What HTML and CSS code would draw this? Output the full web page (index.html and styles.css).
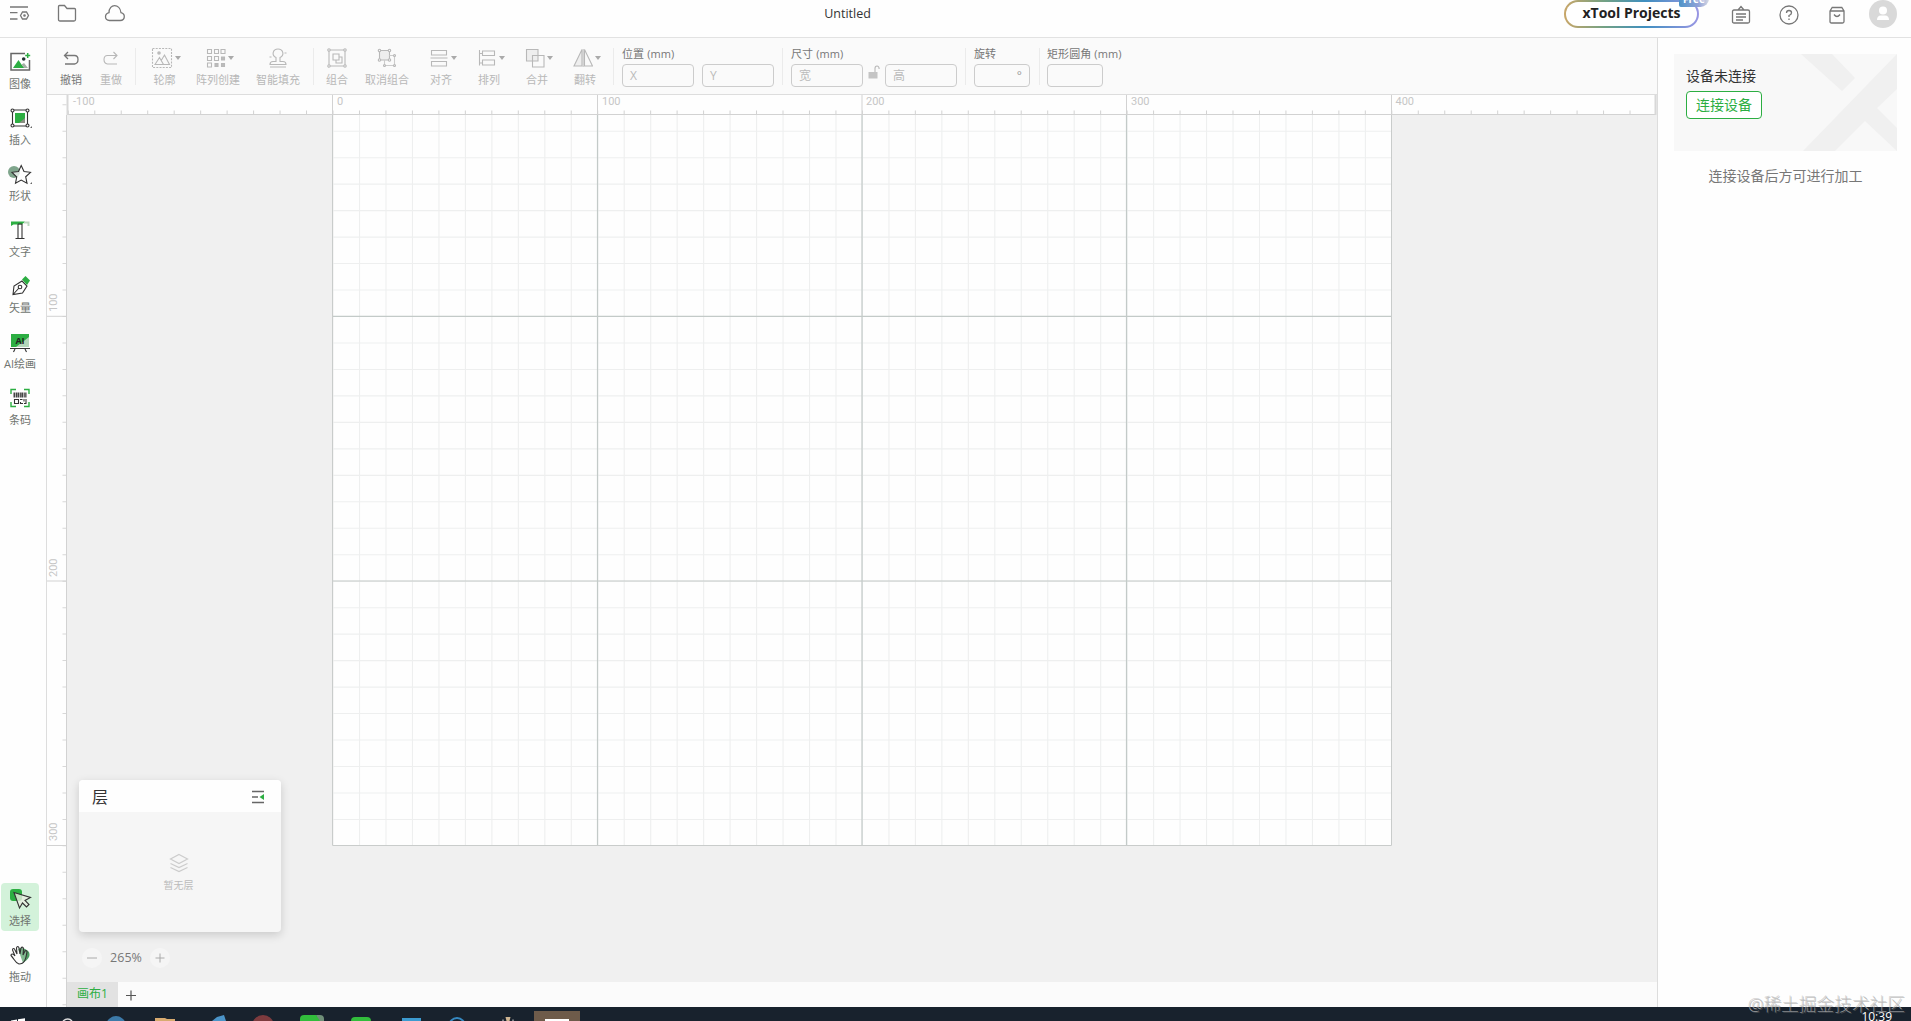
FILE: index.html
```html
<!DOCTYPE html>
<html lang="zh-CN">
<head>
<meta charset="utf-8">
<title>Untitled</title>
<link rel="stylesheet" href="styles.css">
</head>
<body>
<div class="app">
  <header class="header">
    <div class="header-left">
      <svg class="ic" width="24" height="24" viewBox="0 0 24 24"><path d="M3 6h18M3 11.700h7.500M3 18h7.500"/><path d="M13.500 14.500l2-3.500h4l2 3.500-2 3.500h-4z"/><circle cx="17.500" cy="14.500" r=".7"/></svg>
      <svg class="ic" width="24" height="24" viewBox="0 0 24 24"><path d="M4.500 4.500h5l2.500 3h7.500q1 0 1 1v10q0 1.500-1.500 1.500H5q-1.500 0-1.500-1.500v-13q0-1 1-1z"/></svg>
      <svg class="ic" width="24" height="24" viewBox="0 0 24 24"><path d="M6.500 19.500c-5.500-.3-5-6.800-.5-7.800 0-9.500 11-9.500 12 0 4.500 1 4.500 7.500-.8 7.800z"/></svg>
    </div>
    <div class="title">Untitled</div>
    <div class="header-right">
      <div class="projects">xTool Projects<span class="free">Free</span></div>
      <svg class="ic" width="24" height="24" viewBox="0 0 24 24"><path d="M5 7h14q1.500 0 1.500 1.500v10q0 1.500-1.500 1.500H5q-1.500 0-1.500-1.500v-10Q3.500 7 5 7zM9 7l3-3.500L15 7M7 11h10M7 14h10M7 17h7"/></svg>
      <svg class="ic" width="24" height="24" viewBox="0 0 24 24"><circle cx="12" cy="12" r="9"/><path d="M9.500 10q0-2.500 2.500-2.500t2.500 2.200Q14.500 11.500 12 12.500v1.500M12 15.500v1.500"/></svg>
      <svg class="ic" width="24" height="24" viewBox="0 0 24 24"><path d="M5 8l2.200-3.500h9.600L19 8v10.500q0 1.500-1.500 1.500h-11Q5 20 5 18.500zM5 8h14M9 11.500q3 4 6 0"/></svg>
      <svg class="avatar" width="28" height="28" viewBox="0 0 28 28"><circle cx="14" cy="14" r="14" fill="#d9d9d9"/><circle cx="14" cy="10.500" r="4" fill="#fff"/><path d="M8 20q0-4.500 4-4.500h4q4 0 4 4.500z" fill="#fff"/></svg>
    </div>
  </header>

  <div class="main">
    <nav class="sidebar">
      <div class="side-group">
        <div class="side"><svg width="24" height="24" viewBox="0 0 24 24"><path d="M17 3.500H3v16.500h18.500V10" class="d g"/><path d="M5 18l5.500-8 3 4.500 3 3.500z" fill="#2cae42"/><path d="M13.500 14.500l2.500-1.500 4 5h-4z" fill="#a5b0a6"/><circle cx="15.700" cy="9" r="1.800" fill="#233"/><path d="M19.700 3v5M17.200 5.500h5" stroke="#2cae42" stroke-width="1.500"/></svg><span>图像</span></div>
        <div class="side more"><svg width="24" height="24" viewBox="0 0 24 24"><path d="M7 7h10v7l-4 3H7z" fill="#2cae42"/><path d="M17 12v5h-6z" fill="#8a8f82"/><path d="M6 4h12M4.500 5.500v13M6 20h12M19.500 5.500v13" class="d"/><g class="d" fill="#fff"><circle cx="4.500" cy="4.500" r="1.500"/><circle cx="19.500" cy="4.500" r="1.500"/><circle cx="4.500" cy="19.500" r="1.500"/><circle cx="19.500" cy="19.500" r="1.500"/></g></svg><span>插入</span></div>
        <div class="side more"><svg width="24" height="24" viewBox="0 0 24 24"><circle cx="6" cy="10" r="6" fill="#7fa58c"/><path d="M13.200 3.500l2.800 6 6.500.8-4.800 4.500 1.300 6.500-5.800-3.200-5.700 3.200L8.700 15 4 10.300l6.500-.8z" class="d" fill="#fff" fill-opacity=".7"/></svg><span>形状</span></div>
        <div class="side"><svg width="24" height="24" viewBox="0 0 24 24"><path d="M3 8V3.500h14l-3 3H5.500z" fill="#2cae42"/><path d="M16 4.500h4.500V8" stroke="#bcd5bf" stroke-width="2"/><path d="M10 6v14.500M14 6v14.500M7.500 20.500h9M10 6h4" class="d"/></svg><span>文字</span></div>
        <div class="side"><svg width="24" height="24" viewBox="0 0 24 24"><path d="M5 20.500L6 12l8-5 5 5-4.500 7zM5 20.500l6-6.500" class="d"/><circle cx="12" cy="13" r="1.800" class="d"/><path d="M14 5.500L17.500 2 22 6.500 19 11z" fill="#2cae42"/></svg><span>矢量</span></div>
        <div class="side"><svg width="24" height="24" viewBox="0 0 24 24"><path d="M3 4h18v13H3z" fill="#2cae42"/><path d="M21 7v10H8z" fill="#b3d6b9"/><text x="12" y="14" text-anchor="middle" class="ai">AI</text><path d="M2 18.500h20M7 19l-1.500 3M17 19l1.500 3" class="d"/></svg><span>AI绘画</span></div>
        <div class="side"><svg width="24" height="24" viewBox="0 0 24 24"><path d="M3 8V3.500h5M16 3.500h5V8M3 16v4.500h5M16 20.500h5V16" stroke="#2cae42" stroke-width="1.400"/><path d="M5.500 9h13" stroke="#444" stroke-width="5" stroke-dasharray="1.700 .6 1.200 .4"/><path d="M6.500 13.500h4v4h-4zM12 13.500h2.500M16 13v2.500M18 13v5M12.500 16v2M12 17.500h3M16 17.500h2" class="d" stroke-width="1.400"/></svg><span>条码</span></div>
      </div>
      <div class="side-group">
        <div class="side active"><svg width="24" height="24" viewBox="0 0 24 24"><path d="M5 2h6q3 0 3 3v6q0 3-3 3H5q-3 0-3-3V5q0-3 3-3z" fill="#2cae42"/><path d="M6 5.500l16.500 5-5.500 3 4 4-2.500 2.500-4-4-3 5z" class="d" fill="#e8eee0" fill-opacity=".8"/></svg><span>选择</span></div>
        <div class="side"><svg width="24" height="24" viewBox="0 0 24 24"><path d="M10 6q5-3 11 3c2 5-2 8-6 11z" fill="#4d9b61"/><path d="M11 21c-4-1-4.500-5-8-8.500 0-2 2-2 4 .5L4.500 7c0-2 2-2 2.500 0l2 4L8.500 5c.5-2 2-2 2.500 0l1 6 1-6c1-1.500 2.500-1 2.500 1l-.5 6 2-4c1-1 2 0 2 1-1 4-1 12-8 12z" class="d" fill="#fff" fill-opacity=".3"/></svg><span>拖动</span></div>
      </div>
    </nav>

    <section class="work">
      <div class="toolbar">
        <div class="tool on"><div class="ti"><svg width="20" height="20" viewBox="0 0 20 20"><path d="M7 4L3.500 7.500 7 11M3.500 7.500h10q3.500 0 3.500 4t-3.500 4.500H4"/></svg></div>撤销</div>
        <div class="tool"><div class="ti"><svg width="20" height="20" viewBox="0 0 20 20"><path d="M12.500 4L16 7.500 12.500 11M16 7.500H6.500Q3 7.500 3 11.500t3.500 4.500H16"/></svg></div>重做</div>
        <i class="sep"></i>
        <div class="tool"><div class="ti"><svg width="22" height="22" viewBox="0 0 22 22"><path d="M1.500 1.500h19v19h-19z" stroke-dasharray="2 1.200"/><path d="M4 17.500l4.500-7 4 7zM10.500 13l3-5 5 9.500h-6"/><circle cx="8" cy="6" r="1.800" fill="#bbb" stroke="none"/></svg><b></b></div>轮廓</div>
        <div class="tool"><div class="ti"><svg width="20" height="20" viewBox="0 0 20 20"><path d="M1.500 1.500h4v4h-4zM8.500 1.500h4v4h-4zM15 1.500h4v4h-4zM1.500 8.500h4v4h-4zM8.500 8.500h4v4h-4zM1.500 15h4v4h-4z"/><path d="M15.500 9h3v3h-3zM9 15.500h3v3H9zM15.500 15.500h3v3h-3z" fill="#bbb"/></svg><b></b></div>阵列创建</div>
        <div class="tool"><div class="ti"><svg width="20" height="20" viewBox="0 0 20 20"><path d="M8 13.500V9.500C3 7 5 1 10 1s7 6 2 8.500v4h3q3 0 3 3H2q0-3 3-3zM2 19h16M1.500 9h2M16.500 5h2"/></svg></div>智能填充</div>
        <i class="sep"></i>
        <div class="tool"><div class="ti"><svg width="20" height="20" viewBox="0 0 20 20"><path d="M2 2h16v16H2zM6 6h6v6H6zM12 9h3v6H9v-3"/><g fill="#f9f9f9"><circle cx="2" cy="2" r="1.200"/><circle cx="18" cy="2" r="1.200"/><circle cx="2" cy="18" r="1.200"/><circle cx="18" cy="18" r="1.200"/></g></svg></div>组合</div>
        <div class="tool"><div class="ti"><svg width="20" height="20" viewBox="0 0 20 20"><path d="M2.500 2.500h10v9.500h-10z" fill="#eee"/><path d="M12.500 7.500h5v10h-10V12" stroke="#ccc"/><g fill="#f9f9f9"><circle cx="2.500" cy="2.500" r="1.200"/><circle cx="12.500" cy="2.500" r="1.200"/><circle cx="2.500" cy="12" r="1.200"/><circle cx="12.500" cy="12" r="1.200"/><circle cx="17.500" cy="7.500" r="1"/><circle cx="17.500" cy="17.500" r="1"/><circle cx="7.500" cy="17.500" r="1"/></g></svg></div>取消组合</div>
        <div class="tool"><div class="ti"><svg width="20" height="20" viewBox="0 0 20 20"><path d="M2.500 2.500h15V7h-15zM1.500 10h17M2.500 13.500h15V18h-15z"/></svg><b></b></div>对齐</div>
        <div class="tool"><div class="ti"><svg width="20" height="20" viewBox="0 0 20 20"><path d="M2.500 2v15.500M2.500 5.500h3M2.500 15h3M5.500 3h12v4.500h-12zM5.500 12h12v5h-12z"/></svg><b></b></div>排列</div>
        <div class="tool"><div class="ti"><svg width="20" height="20" viewBox="0 0 20 20"><path d="M1.500 1.500H13V13H1.500z" fill="#eee"/><path d="M7.500 7.500H19V19H7.500z"/></svg><b></b></div>合并</div>
        <div class="tool"><div class="ti"><svg width="20" height="20" viewBox="0 0 20 20"><path d="M9 1.500V18H1z" fill="#eee"/><path d="M11.500 1.500V18h8z"/><path d="M10.200 1v18" stroke-width=".8"/></svg><b></b></div>翻转</div>
        <i class="sep"></i>
        <div class="field"><label>位置 (mm)</label><div class="inputs"><div class="input">X</div><div class="input">Y</div></div></div>
        <i class="sep"></i>
        <div class="field"><label>尺寸 (mm)</label><div class="inputs size"><div class="input">宽</div><svg width="12" height="16" viewBox="0 0 12 16"><path d="M.5 8h9v6.500h-9z" fill="#c4c4c4" stroke="none"/><path d="M7 8V4.500q0-2.500 2-2.500t2.200 3"/></svg><div class="input">高</div></div></div>
        <i class="sep"></i>
        <div class="field"><label>旋转</label><div class="input small deg">°</div></div>
        <i class="sep"></i>
        <div class="field"><label>矩形圆角 (mm)</label><div class="input small"></div></div>
      </div>

      <div class="stage">
        <!-- Rulers and 10 mm grid; dashed thick strokes produce the evenly spaced marks. -->
        <svg class="board" width="1610" height="912" viewBox="47 95 1610 912">
          <path d="M47 95h1610v912H47z" fill="#f0f0f0"/>
          <path d="M332 115h1060v731H332z" fill="#fefefe"/>
          <path d="M332.500 480h1058.800" stroke="#eeefef" stroke-width="730" stroke-dasharray="1.100 25.370"/>
          <path d="M862 104.200v741" stroke="#eeefef" stroke-width="1059" stroke-dasharray="1.100 25.370"/>
          <path d="M47 95h20v912H47zM47 95h1609v20H47z" fill="#fefefe"/>
          <path d="M597.500 115v731M862 115v731M1126.500 115v731M332 316.300h1060M332 581h1060" stroke="#c3cac8" stroke-width="1.200"/>
          <path d="M332.500 115v730.500h1059V115" fill="none" stroke="#c9cccb"/>
          <path d="M67.800 112.500H1656" stroke="#d2d2d2" stroke-width="4" stroke-dasharray="1 25.470"/>
          <path d="M64.500 104.200V1007" stroke="#d8d8d8" stroke-width="4" stroke-dasharray="1 25.470"/>
          <path d="M67 114.500h1589M66.500 115v892M332.500 95v20M597.500 95v20M862 95v20M1126.500 95v20M1391.500 95v20M47 316.300h20M47 581h20M47 845.500h20" stroke="#d2d2d2" fill="none"/>
          <path d="M67.500 95v20M1655.500 95v20" stroke="#d8d8d8" stroke-width="2"/>
          <g class="rule">
            <text x="73" y="105">-100</text><text x="337" y="105">0</text><text x="602" y="105">100</text><text x="866" y="105">200</text><text x="1131" y="105">300</text><text x="1395.500" y="105">400</text>
            <text transform="translate(57 312) rotate(-90)">100</text><text transform="translate(57 577) rotate(-90)">200</text><text transform="translate(57 841) rotate(-90)">300</text>
          </g>
        </svg>
        <div class="layers">
          <div class="layers-head">层<svg width="14" height="14" viewBox="0 0 14 14"><path d="M1 1.500h12M1 7h6M1 12.500h12" stroke="#666" stroke-width="1.500"/><path d="M13 4v6L8.500 7z" fill="#2cae42"/></svg></div>
          <div class="layers-body">
            <svg width="20" height="20" viewBox="0 0 20 20"><path d="M10 1.500L18.500 6 10 10.500 1.500 6zM1.500 10.500L10 14.500l8.500-4M1.500 14.500L10 18.500l8.500-4" stroke="#ccc" stroke-width="1.200"/></svg>
            <span>暂无层</span>
          </div>
        </div>
        <div class="zoom">
          <svg width="20" height="20" viewBox="0 0 20 20"><circle cx="10" cy="10" r="10" fill="#f5f5f5"/><path d="M5 10h10" stroke="#aaa"/></svg>
          <span>265%</span>
          <svg width="20" height="20" viewBox="0 0 20 20"><circle cx="10" cy="10" r="10" fill="#f5f5f5"/><path d="M5.500 10h9M10 5.500v9" stroke="#aaa"/></svg>
        </div>
        <div class="tabs"><span class="tab">画布1</span><svg width="12" height="12" viewBox="0 0 12 12"><path d="M1 6.500h10M6 1.500v10" stroke="#555" stroke-width="1.200"/></svg></div>
      </div>
    </section>

    <aside class="panel">
      <div class="device">
        <svg class="mark" width="97" height="97" viewBox="0 0 97 97"><path d="M1 0h31l23 24-13 13zM97 0v35L77 54l20 20v23L65 67 35 97H3z" fill="#f0f0f0"/></svg>
        <div class="device-info">
          <div class="device-name">设备未连接</div>
          <button class="connect">连接设备</button>
        </div>
      </div>
      <p class="hint">连接设备后方可进行加工</p>
    </aside>
  </div>

  <footer class="taskbar">
    <svg width="600" height="14" viewBox="0 0 600 14">
      <path d="M11 13.500l6-1v1.500h-6zM18 12.300l7-1V14h-7z" fill="#fff"/>
      <path d="M63 14q5-4 9 0" stroke="#ddd" stroke-width="1.500"/>
      <circle cx="116" cy="19" r="10" fill="#3c7aa9"/>
      <path d="M155 11h10l2 1h8v2h-20z" fill="#d8ab70"/>
      <path d="M212 14l5-4 7-2 2 6z" fill="#4b94c8"/>
      <circle cx="263" cy="19" r="11" fill="#7d3b3e"/>
      <path d="M316 8h4q4 0 4 4v2h-6z" fill="#6f8f78"/>
      <path d="M300 14v-2q0-4 4-4h12l4 6z" fill="#32bd3c"/>
      <rect x="351" y="10" width="20" height="14" rx="4" fill="#32bd3c"/>
      <path d="M402 11h19v3h-19z" fill="#3c9bd0"/>
      <circle cx="457" cy="19" r="8" stroke="#3689c1" stroke-width="2"/>
      <path d="M505.500 10h5l-1 4h-3z" fill="#cdb491"/><path d="M503 14v-1.500M513 14v-1.500" stroke="#ddd"/>
      <path d="M534 4h46v10h-46z" fill="#6e5b4a"/><path d="M545 12h24v2h-24z" fill="#fff"/>
    </svg>
    <span class="clock">10:39</span>
  </footer>
  <div class="watermark">@稀土掘金技术社区</div>
</div>
</body>
</html>
```
FILE: styles.css
```css
* { box-sizing: border-box; }
body { margin: 0; font-family: "Open Sans", "Noto Sans CJK SC", sans-serif; background: #fefefe; }
svg { display: block; flex: none; fill: none; }
.app { position: relative; width: 1911px; height: 1021px; overflow: hidden; display: flex; flex-direction: column; }

.header { height: 38px; flex: none; border-bottom: 1px solid #e2e2e2; display: grid; grid-template-columns: 600px 495px 1fr; }
.header-left { display: flex; gap: 24px; padding: 1px 0 0 7px; }
.ic { stroke: #777; stroke-width: 1.3; }
.title { text-align: center; font-size: 12.5px; line-height: 28px; color: #333; }
.header-right { display: flex; justify-content: flex-end; gap: 24px; padding: 0 14px 0 0; }
.header-right .ic { margin-top: 3px; }
.projects { position: relative; flex: none; width: 135px; height: 28px; margin-right: 6px; border: 2px solid transparent; border-radius: 14px; text-align: center; font-size: 14px; line-height: 22px; font-weight: 700; color: #222; background: linear-gradient(#fff, #fff) padding-box, linear-gradient(90deg, #c9a668, #72a184 30%, #3f8fc0 60%, #9a96e4) border-box; }
.free { position: absolute; left: 113px; top: -12px; width: 30px; height: 17px; border-radius: 9px 9px 9px 2px; background: linear-gradient(90deg, #4d93c8, #92a2d8 65%, #d5d9e4); color: #fff; font-size: 10px; line-height: 19px; }
.avatar { margin-left: -4px; }

.main { flex: 1; min-height: 0; display: grid; grid-template-columns: 47px 1610px 1fr; }
.sidebar { border-right: 1px solid #ddd; padding: 8px 0 20px 1px; display: flex; flex-direction: column; justify-content: space-between; }
.side-group { display: flex; flex-direction: column; gap: 8px; }
.side { position: relative; width: 38px; height: 48px; padding-top: 4px; display: flex; flex-direction: column; align-items: center; gap: 4px; border-radius: 4px; font-size: 11px; line-height: 12px; color: #707570; white-space: nowrap; }
.side.active { background: #d3f2da; }
.side.more::after { content: ""; position: absolute; right: 7px; top: 24px; border: 1.5px solid; border-color: transparent #666 #666 transparent; }
.d { stroke: #333; stroke-width: 1.1; }
.d.g { stroke: #666; stroke-width: 1.5; }
.ai { font: 700 9px "Open Sans", sans-serif; fill: #222; }

.work { display: flex; flex-direction: column; }
.toolbar { height: 57px; flex: none; background: #fafafa; border-bottom: 1px solid #ddd; padding: 10px 0 0 4px; display: grid; grid-template-columns: 40px 40px 9px 49px 58px 62px 8px 40px 60px 48px 48px 48px 48px 9px 160px 9px 174px 9px 65px 8px 130px; }
.tool { display: flex; flex-direction: column; align-items: center; font-size: 11px; line-height: 12px; color: #b8b8b8; white-space: nowrap; }
.tool svg, .size svg { stroke: #b8b8b8; stroke-width: 1.1; }
.tool.on { color: #777; }
.tool.on svg { stroke: #777; stroke-width: 1.3; }
.ti { height: 20px; margin-bottom: 6px; display: flex; align-items: center; gap: 2px; }
.ti b { border: 3px solid transparent; border-top: 4px solid #aaa; border-bottom: 0; margin-right: -3px; }
.sep { width: 1px; height: 37px; justify-self: center; background: #ebebeb; }
.field { padding-left: 4px; color: #777; }
.field label { display: block; font-size: 11px; line-height: 12px; margin-bottom: 3px; padding-bottom: 1px; letter-spacing: .1px; }
.inputs { display: flex; gap: 8px; }
.inputs.size { gap: 5px; }
.input { width: 72px; height: 23px; border: 1px solid #ccc; border-radius: 4px; padding-left: 7px; font-size: 12px; line-height: 21px; color: #bbb; }
.input.small { width: 56px; }
.input.deg { text-align: right; padding-right: 7px; color: #999; }

.stage { position: relative; height: 912px; }
.rule text { font: 11px Roboto, sans-serif; fill: #c6c6c6; }
.layers { position: absolute; left: 32px; top: 685px; width: 202px; height: 152px; border-radius: 4px; background: #f6f6f6; box-shadow: 0 3px 10px rgba(0,0,0,.16); overflow: hidden; }
.layers-head { height: 32px; padding: 1px 16px 0 13px; background: #fefefe; display: flex; align-items: center; justify-content: space-between; font-size: 16px; line-height: 24px; color: #333; }
.layers-body { padding-top: 41px; display: flex; flex-direction: column; align-items: center; gap: 6px; padding-right: 3px; font-size: 10px; line-height: 12px; color: #bbb; }
.zoom { position: absolute; left: 35px; top: 853px; width: 88px; display: flex; align-items: center; justify-content: space-between; font-size: 12.5px; line-height: 20px; color: #777; }
.tabs { position: absolute; left: 20px; right: 0; bottom: 0; height: 25px; background: #fbfbfb; display: flex; align-items: center; gap: 7px; }
.tab { width: 51px; height: 25px; background: #e2e2e2; color: #2cae42; text-align: center; font-size: 12px; line-height: 23px; }

.panel { border-left: 1px solid #ddd; padding: 16px 14px 0 16px; }
.device { position: relative; height: 97px; background: #f8f8f8; padding: 12px; }
.mark { position: absolute; right: 0; top: 0; }
.device-info { position: relative; display: flex; flex-direction: column; align-items: flex-start; gap: 5px; }
.device-name { font-size: 14px; line-height: 20px; color: #333; }
.connect { width: 76px; height: 28px; padding: 0; border: 1px solid #2cae42; border-radius: 4px; background: #fff; color: #2cae42; font: 14px/24px "Open Sans", "Noto Sans CJK SC", sans-serif; }
.hint { margin: 15px 0 0; text-align: center; font-size: 14px; line-height: 20px; color: #777; }

.taskbar { height: 14px; flex: none; background: #18222d; display: flex; justify-content: space-between; }
.clock { margin-right: 19px; color: #fff; font-size: 12px; line-height: 20px; }
.watermark { position: absolute; right: 6px; top: 991px; font: 300 17.7px/26px "Noto Sans", "Noto Sans CJK SC", sans-serif; color: rgba(190,190,190,.7); text-shadow: 1px 1px 0 rgba(110,110,110,.45); }
```
